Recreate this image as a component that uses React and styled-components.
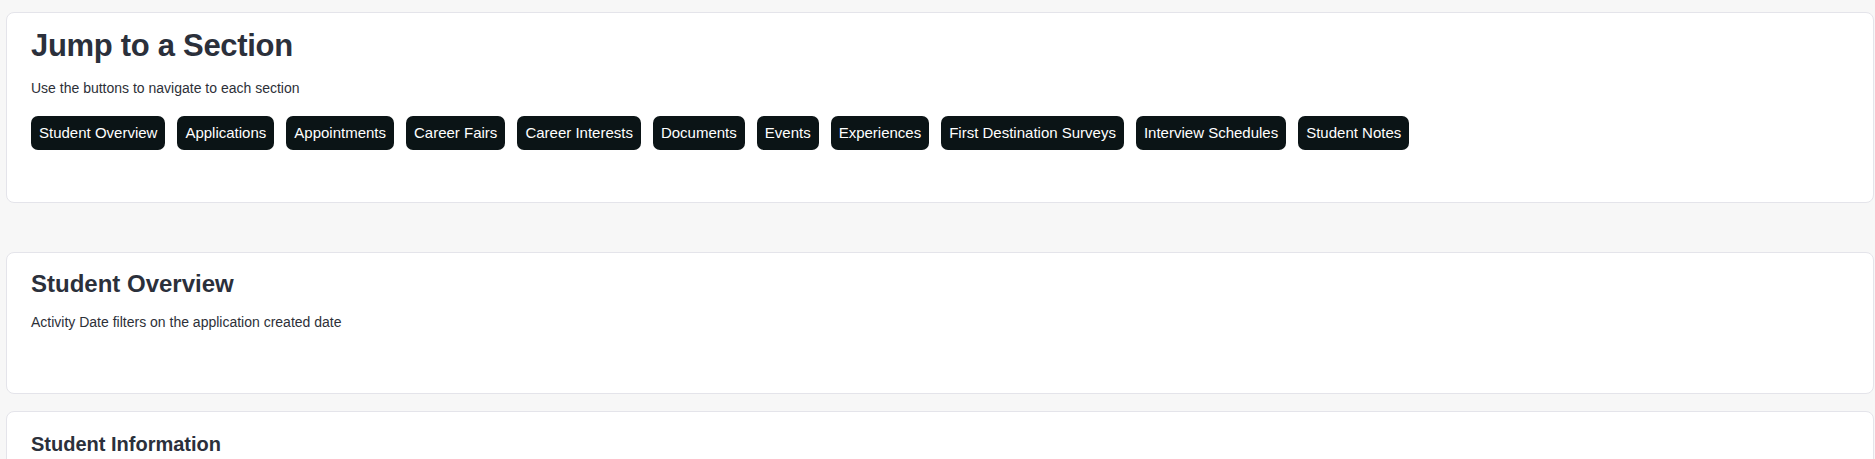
import React from "react";
import styled, { createGlobalStyle } from "styled-components";

const GlobalStyle = createGlobalStyle`
  html, body {
    margin: 0;
    padding: 0;
    background: #f7f7f7;
    font-family: "Liberation Sans", Arial, Helvetica, sans-serif;
    color: #2b303b;
  }
  * { box-sizing: border-box; }
`;

const Page = styled.div`
  padding: 12px 1px 0 6px;
  display: flex;
  flex-direction: column;
`;

const Card = styled.section`
  background: #ffffff;
  border: 1px solid #e4e4ea;
  border-radius: 8px;
  padding: ${(p) => p.$pad};
  margin-bottom: ${(p) => p.$gap || "0px"};
  display: flex;
  flex-direction: column;
  align-items: flex-start;
`;

const Title = styled.h2`
  margin: 0;
  font-size: ${(p) => p.$size};
  line-height: ${(p) => p.$lh};
  font-weight: 700;
  letter-spacing: ${(p) => p.$ls || "0"};
  color: #2b303b;
`;

const Subtitle = styled.p`
  margin: ${(p) => p.$mt} 0 0;
  font-size: 14px;
  line-height: 16px;
  color: #2d3038;
`;

const ButtonRow = styled.nav`
  display: flex;
  flex-wrap: wrap;
  gap: 12px;
  margin-top: 20px;
`;

const JumpButton = styled.button`
  background: #0b1416;
  color: #ffffff;
  border: none;
  border-radius: 7px;
  padding: 8px 8px;
  font-family: "Liberation Sans", Arial, Helvetica, sans-serif;
  font-size: 15px;
  line-height: 18px;
  cursor: pointer;
  white-space: nowrap;
`;

const sections = [
  "Student Overview",
  "Applications",
  "Appointments",
  "Career Fairs",
  "Career Interests",
  "Documents",
  "Events",
  "Experiences",
  "First Destination Surveys",
  "Interview Schedules",
  "Student Notes",
];

export default function App() {
  return (
    <>
      <GlobalStyle />
      <Page>
        <Card $pad="15px 24px 52px" $gap="49px">
          <Title $size="31px" $lh="36px" $ls="-0.3px">
            Jump to a Section
          </Title>
          <Subtitle $mt="16px">Use the buttons to navigate to each section</Subtitle>
          <ButtonRow>
            {sections.map((s) => (
              <JumpButton key={s}>{s}</JumpButton>
            ))}
          </ButtonRow>
        </Card>
        <Card $pad="17px 24px 63px" $gap="17px">
          <Title $size="24px" $lh="28px">
            Student Overview
          </Title>
          <Subtitle $mt="16px">Activity Date filters on the application created date</Subtitle>
        </Card>
        <Card $pad="21px 24px 60px">
          <Title $size="20px" $lh="23px">
            Student Information
          </Title>
        </Card>
      </Page>
    </>
  );
}
